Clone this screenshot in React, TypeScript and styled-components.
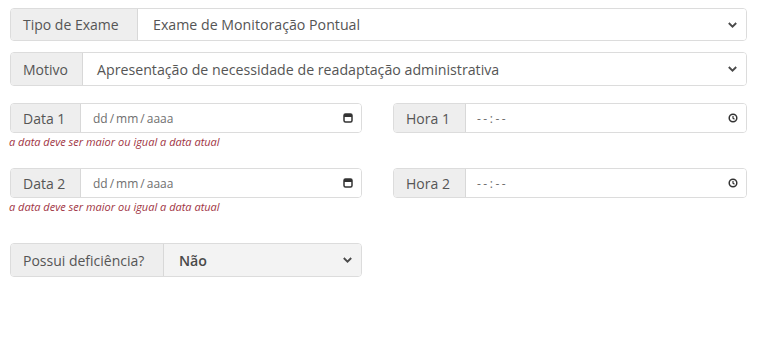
import React from 'react';
import styled, { createGlobalStyle } from 'styled-components';

const GlobalStyle = createGlobalStyle`
  html, body {
    margin: 0;
    padding: 0;
    background: #ffffff;
    font-family: 'Open Sans', 'Liberation Sans', Arial, sans-serif;
  }
`;

const Page = styled.div`
  width: 737px;
  padding: 8px 0 0 10px;
`;

const FullRow = styled.div<{ $height: number; $mb: number }>`
  display: flex;
  height: ${(p) => p.$height}px;
  margin-bottom: ${(p) => p.$mb}px;
`;

const Pair = styled.div`
  display: grid;
  grid-template-columns: 352px 354px;
  column-gap: 31px;
`;

const Cell = styled.div<{ $mb: number }>`
  margin-bottom: ${(p) => p.$mb}px;
`;

const Group = styled.div<{ $height: number; $width?: number }>`
  display: flex;
  height: ${(p) => p.$height}px;
  width: ${(p) => (p.$width ? `${p.$width}px` : '100%')};
  box-sizing: border-box;
  border: 1px solid #dcdcdc;
  border-radius: 4px;
  overflow: hidden;
`;

const Addon = styled.div<{ $width: number }>`
  flex: 0 0 ${(p) => p.$width}px;
  box-sizing: border-box;
  display: flex;
  align-items: center;
  padding-left: 12px;
  background: #eeeeee;
  border-right: 1px solid #d8d8d8;
  color: #555555;
  font-size: 14px;
  white-space: nowrap;
`;

const Field = styled.div<{ $pad: number; $gray?: boolean }>`
  flex: 1;
  display: flex;
  align-items: center;
  justify-content: space-between;
  padding: 0 8px 0 ${(p) => p.$pad}px;
  background: ${(p) => (p.$gray ? '#f3f3f3' : '#ffffff')};
  min-width: 0;
`;

const Value = styled.span<{ $bold?: boolean }>`
  color: ${(p) => (p.$bold ? '#4a4a4a' : '#555555')};
  font-size: 14.2px;
  font-weight: ${(p) => (p.$bold ? 600 : 400)};
  white-space: nowrap;
`;

const Placeholder = styled.span<{ $spaced?: boolean }>`
  color: #6f6f6f;
  font-size: 12px;
  letter-spacing: ${(p) => (p.$spaced ? '2.5px' : '0')};
  white-space: nowrap;
`;

const Hint = styled.div`
  margin-top: 3px;
  margin-left: -1px;
  color: #a03443;
  font-size: 11px;
  line-height: 12px;
  font-style: italic;
  white-space: nowrap;
`;

const Chevron = () => (
  <svg width="11" height="8" viewBox="0 0 11 8">
    <path d="M1.8 2 L5.5 5.6 L9.2 2" fill="none" stroke="#4a4a4a" strokeWidth="1.9" />
  </svg>
);

const CalendarIcon = () => (
  <svg width="10" height="10" viewBox="0 0 10 10">
    <rect x="1" y="1" width="8" height="8" rx="1.5" fill="none" stroke="#333" strokeWidth="1.5" />
    <rect x="1" y="1" width="8" height="3" fill="#333" />
  </svg>
);

const ClockIcon = () => (
  <svg width="10" height="10" viewBox="0 0 10 10">
    <circle cx="5" cy="5" r="3.8" fill="none" stroke="#333" strokeWidth="1.5" />
    <path d="M5 3 V5.2 L6.5 6.3" fill="none" stroke="#333" strokeWidth="1.2" />
  </svg>
);

const msg = 'a data deve ser maior ou igual a data atual';

const DateTimeRow = ({ n }: { n: number }) => (
  <Pair>
    <Cell $mb={n === 1 ? 20 : 30}>
      <Group $height={30}>
        <Addon $width={70}>Data {n}</Addon>
        <Field $pad={12}>
          <Placeholder>dd{'\u2009'}/{'\u2009'}mm{'\u2009'}/{'\u2009'}aaaa</Placeholder>
          <CalendarIcon />
        </Field>
      </Group>
      <Hint>{msg}</Hint>
    </Cell>
    <Cell $mb={0}>
      <Group $height={30}>
        <Addon $width={72}>Hora {n}</Addon>
        <Field $pad={11}>
          <Placeholder $spaced>--:--</Placeholder>
          <ClockIcon />
        </Field>
      </Group>
    </Cell>
  </Pair>
);

export default function App() {
  return (
    <>
      <GlobalStyle />
      <Page>
        <FullRow $height={33} $mb={11}>
          <Group $height={33}>
            <Addon $width={127}>Tipo de Exame</Addon>
            <Field $pad={15}>
              <Value>Exame de Monitoração Pontual</Value>
              <Chevron />
            </Field>
          </Group>
        </FullRow>
        <FullRow $height={34} $mb={17}>
          <Group $height={34}>
            <Addon $width={72}>Motivo</Addon>
            <Field $pad={14}>
              <Value>Apresentação de necessidade de readaptação administrativa</Value>
              <Chevron />
            </Field>
          </Group>
        </FullRow>
        <DateTimeRow n={1} />
        <DateTimeRow n={2} />
        <Group $height={34} $width={352}>
          <Addon $width={153}>Possui deficiência?</Addon>
          <Field $pad={15} $gray>
            <Value $bold>Não</Value>
            <Chevron />
          </Field>
        </Group>
      </Page>
    </>
  );
}
